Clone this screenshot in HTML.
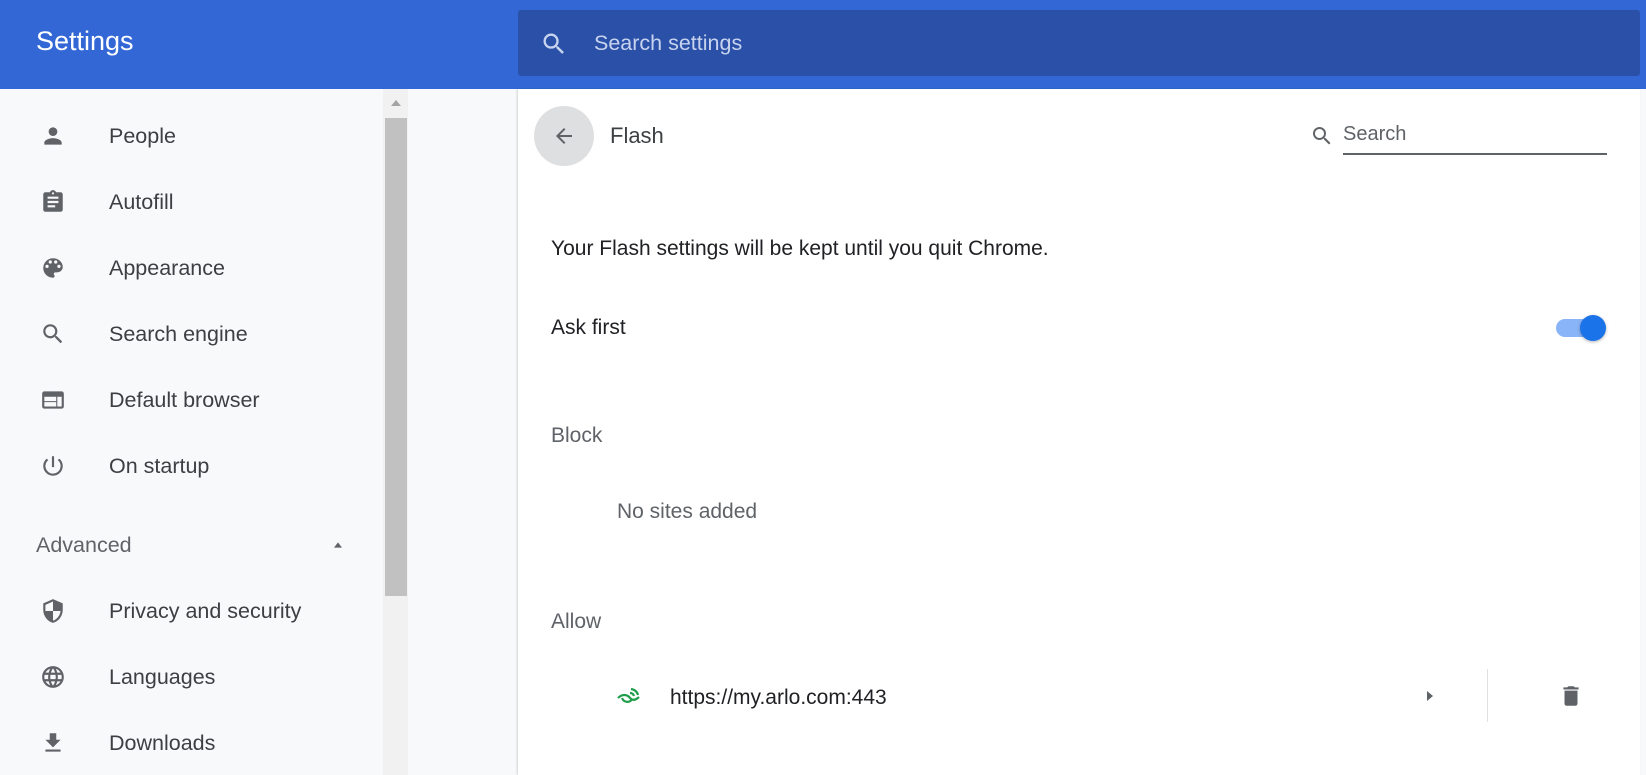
<!DOCTYPE html>
<html><head><meta charset="utf-8"><style>
*{margin:0;padding:0;box-sizing:border-box}
body{width:1646px;height:775px;overflow:hidden;background:#f8f9fa;font-family:"Liberation Sans",sans-serif;position:relative;color:#333}
.hdr{position:absolute;left:0;top:0;width:1646px;height:89px;background:#3367d6}
.title{position:absolute;left:36px;top:26px;color:#fff;font-size:27px}
.sbox{position:absolute;left:518px;top:10px;width:1122px;height:66px;background:#2a50a8;border-radius:3px}
.sbox span{position:absolute;left:76px;top:21px;color:#c8d4ef;font-size:21.5px}
.sbox svg{position:absolute;left:22px;top:20px}
.nav{position:absolute;left:0;width:380px;height:40px;font-size:21.5px;color:#3c4043}
.nav svg{position:absolute;left:40px;top:7px}
.nav span{position:absolute;left:109px;top:8px}
.sb{position:absolute;left:383px;top:89px;width:25px;height:686px;background:#f1f1f1}
.thumb{position:absolute;left:385px;top:118px;width:22px;height:478px;background:#c1c1c1}
.panel{position:absolute;left:518px;top:89px;width:1122px;height:686px;background:#fff;box-shadow:-1px 0 2px rgba(0,0,0,.15)}
.t{position:absolute;font-size:21px;color:#202124}
.g{color:#5f6368}
</style></head><body>
<div class="hdr"><div class="title">Settings</div>
<div class="sbox"><svg width="28" height="28" viewBox="0 0 24 24"><path fill="#c8d4ef" d="M15.5 14h-.79l-.28-.27A6.47 6.47 0 0 0 16 9.5 6.5 6.5 0 1 0 9.5 16c1.61 0 3.09-.59 4.23-1.57l.27.28v.79l5 4.99L20.49 19l-4.99-5zm-6 0C7.01 14 5 11.99 5 9.5S7.01 5 9.5 5 14 7.010 14 9.5 11.99 14 9.5 14z"/></svg><span>Search settings</span></div></div>

<div class="nav" style="top:116px"><svg width="26" height="26" viewBox="0 0 24 24"><path fill="#5f6368" d="M12 12c2.21 0 4-1.790 4-4s-1.79-4-4-4-4 1.79-4 4 1.79 4 4 4zm0 2c-2.67 0-8 1.34-8 4v2h16v-2c0-2.66-5.33-4-8-4z"/></svg><span>People</span></div>
<div class="nav" style="top:182px"><svg width="26" height="26" viewBox="0 0 24 24"><path fill="#5f6368" d="M19 3h-4.18C14.4 1.84 13.3 1 12 1s-2.4.84-2.82 2H5c-1.1 0-2 .9-2 2v14c0 1.1.9 2 2 2h14c1.1 0 2-.9 2-2V5c0-1.1-.9-2-2-2zm-7 0c.55 0 1 .45 1 1s-.45 1-1 1-1-.45-1-1 .45-1 1-1zm2 14H7v-2h7v2zm3-4H7v-2h10v2zm0-4H7V7h10v2z"/></svg><span>Autofill</span></div>
<div class="nav" style="top:248px"><svg width="26" height="26" viewBox="0 0 24 24"><path fill="#5f6368" d="M12 3a9 9 0 0 0 0 18c.83 0 1.5-.67 1.5-1.5 0-.39-.15-.74-.39-1.01-.23-.26-.38-.61-.38-.99 0-.83.67-1.5 1.5-1.5H16c2.76 0 5-2.24 5-5 0-4.42-4.03-8-9-8zm-5.5 9a1.5 1.5 0 1 1 0-3 1.5 1.5 0 0 1 0 3zm3-4a1.5 1.5 0 1 1 0-3 1.5 1.5 0 0 1 0 3zm5 0a1.5 1.5 0 1 1 0-3 1.5 1.5 0 0 1 0 3zm3 4a1.5 1.5 0 1 1 0-3 1.5 1.5 0 0 1 0 3z"/></svg><span>Appearance</span></div>
<div class="nav" style="top:314px"><svg width="26" height="26" viewBox="0 0 24 24"><path fill="#5f6368" d="M15.5 14h-.79l-.28-.27A6.47 6.47 0 0 0 16 9.5 6.5 6.5 0 1 0 9.5 16c1.61 0 3.09-.59 4.23-1.57l.27.28v.79l5 4.99L20.49 19l-4.99-5zm-6 0C7.01 14 5 11.99 5 9.5S7.01 5 9.5 5 14 7.01 14 9.5 11.99 14 9.5 14z"/></svg><span>Search engine</span></div>
<div class="nav" style="top:380px"><svg width="26" height="26" viewBox="0 0 24 24"><path fill="#5f6368" d="M20 4H4c-1.1 0-2 .9-2 2v12c0 1.1.9 2 2 2h16c1.1 0 2-.9 2-2V6c0-1.1-.9-2-2-2zm-5 14H4v-4h11v4zm0-5H4V9h11v4zm5 5h-4V9h4v9z"/></svg><span>Default browser</span></div>
<div class="nav" style="top:446px"><svg width="26" height="26" viewBox="0 0 24 24"><path fill="#5f6368" d="M13 3h-2v10h2V3zm4.83 2.17l-1.42 1.42A6.92 6.92 0 0 1 19 12c0 3.87-3.13 7-7 7A6.995 6.995 0 0 1 7.58 6.58L6.17 5.17A8.932 8.932 0 0 0 3 12a9 9 0 0 0 18 0c0-2.74-1.23-5.18-3.17-6.83z"/></svg><span>On startup</span></div>
<div class="nav" style="top:525px;color:#5f6368"><span style="left:36px">Advanced</span><svg style="left:330px;top:12px" width="16" height="16" viewBox="0 0 24 24"><path fill="#5f6368" d="M6 16l6-8 6 8z"/></svg></div>
<div class="nav" style="top:591px"><svg width="26" height="26" viewBox="0 0 24 24"><path fill="#5f6368" d="M12 1L3 5v6c0 5.55 3.84 10.74 9 12 5.16-1.26 9-6.45 9-12V5l-9-4zm0 10.99h7c-.53 4.12-3.28 7.79-7 8.94V12H5V6.3l7-3.11v8.8z"/></svg><span>Privacy and security</span></div>
<div class="nav" style="top:657px"><svg width="26" height="26" viewBox="0 0 24 24"><path fill="#5f6368" d="M11.99 2C6.47 2 2 6.48 2 12s4.47 10 9.99 10C17.52 22 22 17.52 22 12S17.52 2 11.990 2zm6.93 6h-2.95a15.650 15.650 0 0 0-1.38-3.56A8.03 8.03 0 0 1 18.92 8zM12 4.04c.83 1.2 1.48 2.53 1.91 3.96h-3.82c.43-1.43 1.08-2.76 1.910-3.96zM4.26 14C4.1 13.36 4 12.69 4 12s.1-1.36.26-2h3.38c-.08.66-.14 1.32-.14 2s.06 1.34.14 2H4.26zm.82 2h2.95c.32 1.25.78 2.45 1.38 3.56A7.987 7.987 0 0 1 5.080 16zm2.95-8H5.08a7.987 7.987 0 0 1 4.33-3.56A15.65 15.65 0 0 0 8.03 8zM12 19.96c-.83-1.2-1.48-2.53-1.91-3.96h3.82c-.43 1.43-1.08 2.76-1.91 3.96zM14.34 14H9.66c-.09-.66-.16-1.32-.16-2s.07-1.35.16-2h4.68c.09.65.16 1.32.16 2s-.07 1.34-.16 2zm.25 5.56c.6-1.11 1.06-2.31 1.38-3.56h2.95a8.03 8.03 0 0 1-4.33 3.56zM16.36 14c.08-.66.14-1.32.14-2s-.06-1.34-.14-2h3.38c.16.64.26 1.31.26 2s-.1 1.36-.26 2h-3.38z"/></svg><span>Languages</span></div>
<div class="nav" style="top:723px"><svg width="26" height="26" viewBox="0 0 24 24"><path fill="#5f6368" d="M19 9h-4V3H9v6H5l7 7 7-7zM5 18v2h14v-2H5z"/></svg><span>Downloads</span></div>

<div class="sb"></div><div class="thumb"></div>
<svg style="position:absolute;left:389px;top:98px" width="14" height="10" viewBox="0 0 14 10"><path fill="#a3a3a3" d="M7 2l5 6H2z"/></svg>

<div class="panel">
<div style="position:absolute;left:16px;top:17px;width:60px;height:60px;border-radius:50%;background:#dedfe1"></div>
<svg style="position:absolute;left:34px;top:35px" width="24" height="24" viewBox="0 0 24 24"><path fill="#5f6368" d="M20 11H7.83l5.59-5.59L12 4l-8 8 8 8 1.41-1.41L7.83 13H20v-2z"/></svg>
<div class="t g" style="left:92px;top:34px;font-size:22px;color:#3c4043">Flash</div>
<svg style="position:absolute;left:792px;top:35px" width="24" height="24" viewBox="0 0 24 24"><path fill="#5f6368" d="M15.5 14h-.79l-.28-.27A6.47 6.47 0 0 0 16 9.5 6.5 6.5 0 1 0 9.5 16c1.61 0 3.09-.59 4.23-1.57l.27.28v.79l5 4.99L20.49 19l-4.99-5zm-6 0C7.01 14 5 11.99 5 9.5S7.01 5 9.5 5 14 7.01 14 9.5 11.99 14 9.5 14z"/></svg>
<div class="t g" style="left:825px;top:34px;font-size:20px">Search</div>
<div style="position:absolute;left:825px;top:64px;width:264px;height:2px;background:#5f6368"></div>
<div class="t" style="left:33px;top:148px">Your Flash settings will be kept until you quit Chrome.</div>
<div class="t" style="left:33px;top:227px">Ask first</div>
<div style="position:absolute;left:1038px;top:230px;width:46px;height:18px;border-radius:9px;background:#8ab4f8"></div>
<div style="position:absolute;left:1062px;top:226px;width:26px;height:26px;border-radius:50%;background:#1a73e8;box-shadow:0 1px 3px rgba(0,0,0,.3)"></div>
<div class="t g" style="left:33px;top:335px">Block</div>
<div class="t g" style="left:99px;top:411px">No sites added</div>
<div class="t g" style="left:33px;top:521px">Allow</div>
<svg style="position:absolute;left:98px;top:598px" width="26" height="22" viewBox="0 0 26 22"><path fill="none" stroke="#1e9e4a" stroke-width="2.2" d="M2 11c4-4 9-4 12 0 3 3 6 2 9-1M6 11c2 5 8 5 10 1M14 6a4 4 0 0 1 4 3M15 2a8 8 0 0 1 7 6"/></svg>
<div class="t" style="left:152px;top:597px">https://my.arlo.com:443</div>
<svg style="position:absolute;left:904px;top:599px" width="16" height="16" viewBox="0 0 16 16"><path fill="#5f6368" d="M5 3l6 5-6 5z"/></svg>
<div style="position:absolute;left:969px;top:580px;width:1px;height:53px;background:#e0e0e0"></div>
<svg style="position:absolute;left:1040px;top:594px" width="26" height="26" viewBox="0 0 24 24"><path fill="#5f6368" d="M6 19c0 1.1.9 2 2 2h8c1.1 0 2-.9 2-2V7H6v12zM19 4h-3.5l-1-1h-5l-1 1H5v2h14V4z"/></svg>
</div>
</body></html>
